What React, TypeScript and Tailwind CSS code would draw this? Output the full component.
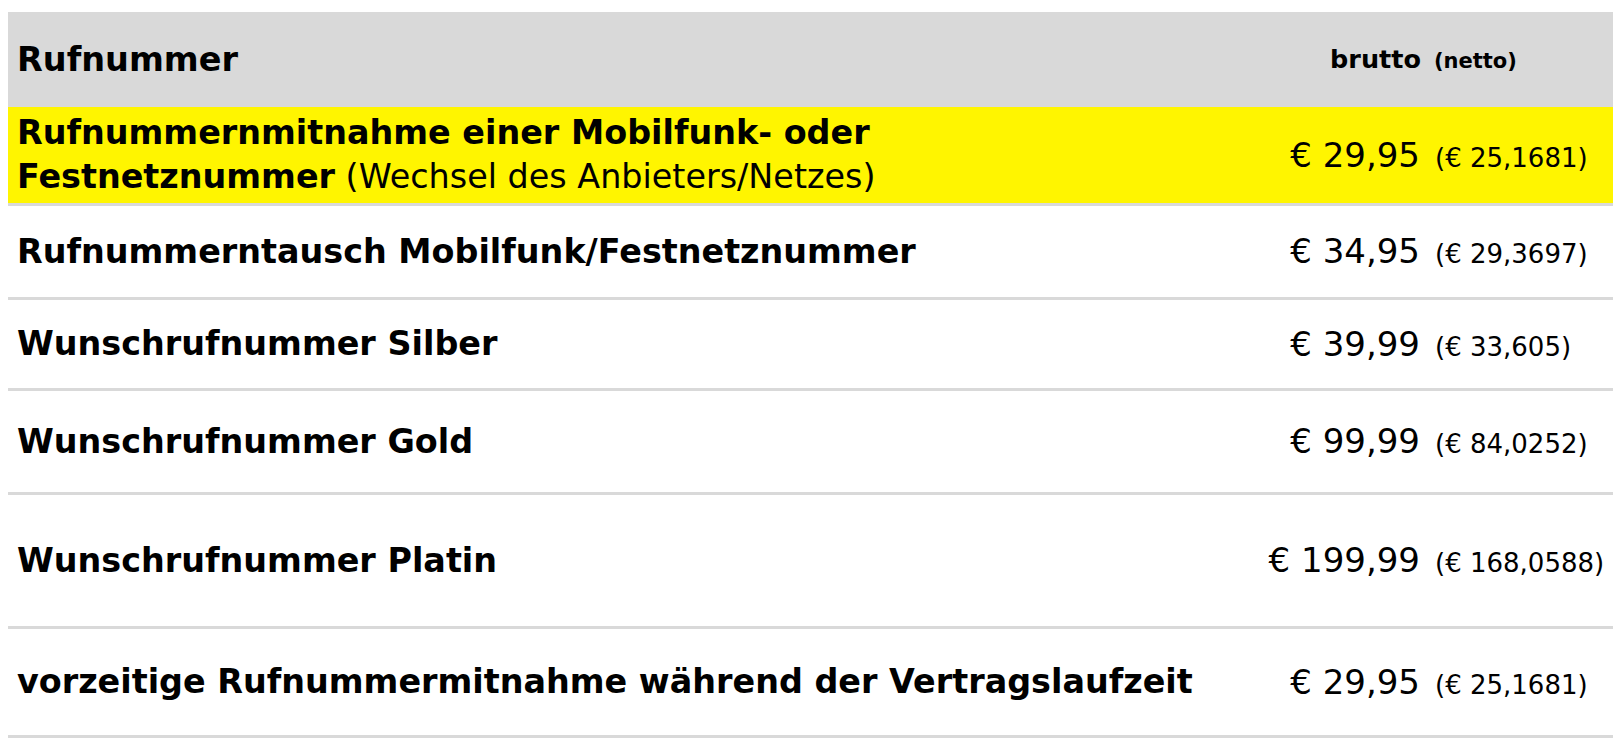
import React from 'react';

interface PriceRow {
  key: string;
  brutto: string;
  netto: string;
  height: string;
  highlight?: boolean;
}

const rows: PriceRow[] = [
  { key: 'mitnahme', brutto: '€ 29,95', netto: '(€ 25,1681)', height: 'h-[99px]', highlight: true },
  { key: 'tausch', brutto: '€ 34,95', netto: '(€ 29,3697)', height: 'h-[94px]' },
  { key: 'silber', brutto: '€ 39,99', netto: '(€ 33,605)', height: 'h-[91px]' },
  { key: 'gold', brutto: '€ 99,99', netto: '(€ 84,0252)', height: 'h-[104px]' },
  { key: 'platin', brutto: '€ 199,99', netto: '(€ 168,0588)', height: 'h-[134px]' },
  { key: 'vorzeitig', brutto: '€ 29,95', netto: '(€ 25,1681)', height: 'h-[109px]' },
];

const labels: Record<string, React.ReactNode> = {
  mitnahme: (
    <>
      <span className="font-bold">Rufnummernmitnahme einer Mobilfunk- oder</span>
      <br />
      <span className="font-bold">Festnetznummer</span> (Wechsel des Anbieters/Netzes)
    </>
  ),
  tausch: <span className="font-bold">Rufnummerntausch Mobilfunk/Festnetznummer</span>,
  silber: <span className="font-bold">Wunschrufnummer Silber</span>,
  gold: <span className="font-bold">Wunschrufnummer Gold</span>,
  platin: <span className="font-bold">Wunschrufnummer Platin</span>,
  vorzeitig: <span className="font-bold">vorzeitige Rufnummermitnahme während der Vertragslaufzeit</span>,
};

const App: React.FC = () => {
  return (
    <div className="min-h-screen bg-white pt-[12px] pl-[8px] text-black font-['DejaVu_Sans',Verdana,sans-serif]">
      <div className="w-[1605px]">
        {/* Header */}
        <div className="flex h-[95px] items-center bg-[#d9d9d9]">
          <div className="flex-1 pl-[9px] text-[33.5px] font-bold leading-[44px]">Rufnummer</div>
          <div className="flex items-baseline">
            <div className="w-[195px] text-right text-[25.5px] font-bold">brutto</div>
            <div className="w-[192px] pl-[13px] text-[21px] font-bold">(netto)</div>
          </div>
        </div>

        {/* Rows */}
        {rows.map((row) => (
          <div
            key={row.key}
            className={`flex items-center border-b-[3px] border-[#d9d9d9] ${row.height} ${
              row.highlight ? 'bg-[#fff500]' : 'bg-white'
            }`}
          >
            <div className="flex-1 whitespace-nowrap pl-[9px] text-[33.4px] leading-[44px]">{labels[row.key]}</div>
            <div className="flex items-baseline">
              <div className="w-[194px] text-right text-[34px]">{row.brutto}</div>
              <div className="w-[193px] pl-[15px] text-[26px]">{row.netto}</div>
            </div>
          </div>
        ))}
      </div>
    </div>
  );
};

export default App;
